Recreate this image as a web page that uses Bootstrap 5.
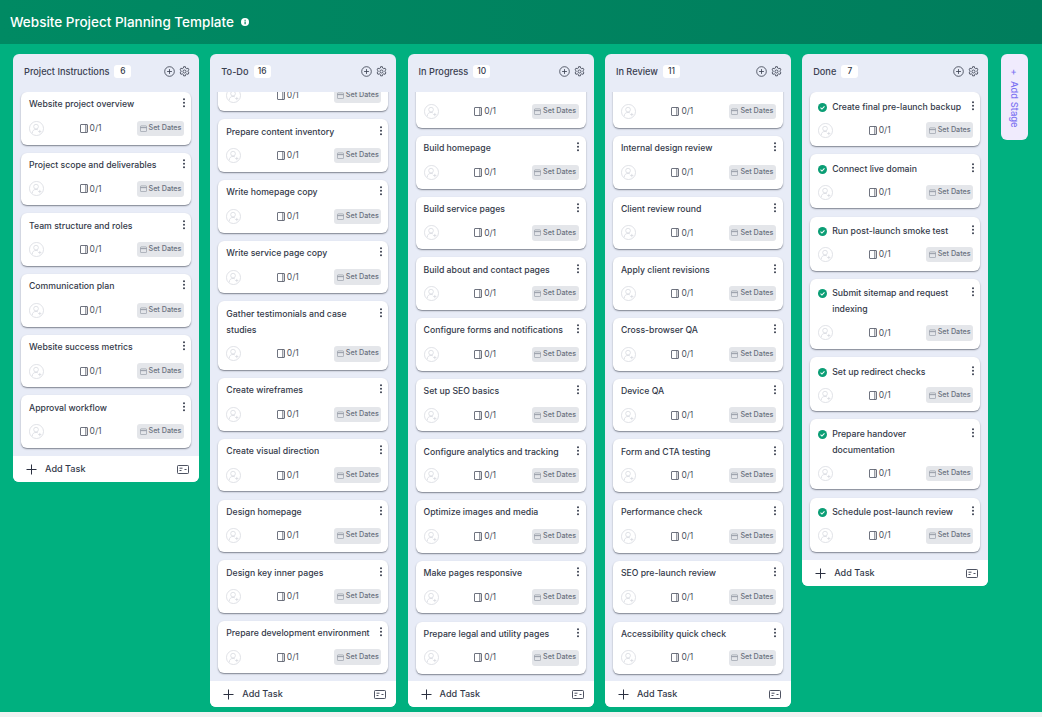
<!DOCTYPE html>
<html lang="en">
<head>
  <meta charset="UTF-8">
  <title>Website Project Planning Template</title>
  <link href="https://cdn.jsdelivr.net/npm/bootstrap@5.3.3/dist/css/bootstrap.min.css" rel="stylesheet">
  <style>
    html, body { height: 717px; overflow: hidden; }
    body { background: #f1f2f2; font-family: Inter, "Liberation Sans", sans-serif; color: #333949; }
    .top-bar { height: 44px; padding-left: 10px; background: linear-gradient(90deg, #008a63, #007d5c); color: #fff; }
    .top-bar h1 { font-size: 13.5px; font-weight: 500; margin: 0 7px 0 0; }
    .board { height: 668px; padding: 10px 13px 5px; gap: 11.3px; background: #00b07f; }
    .stage { width: 186px; flex: none; background: #e8ecf7; border-radius: 6px; overflow: hidden; }
    .stage.full { height: 653px; }
    .stage-head { height: 38px; flex: none; padding: 0 9px 3px 11px; }
    .stage-name { font-size: 9.2px; font-weight: 500; color: #3a4050; }
    .count { width: 17px; height: 13px; margin-left: 5px; border-radius: 3px; background: #fff; font-size: 8.4px; font-weight: 500; line-height: 13px; text-align: center; }
    .tasks { padding: 0 8px 8px; gap: 8.1px; overflow: hidden; }
    .stage.full .tasks { flex: 1 1 0; min-height: 0; }
    .task { flex: none; padding: 4.3px 7px 8.3px 8px; border: 0; border-radius: 6px; background: #fff; box-shadow: 0 1px 1.5px rgba(40, 45, 60, .55); }
    .task-title { font-size: 8.7px; font-weight: 500; line-height: 16px; min-width: 0; min-height: 16px; }
    .task-meta { height: 16px; margin-top: 8px; }
    .progress-text { font-size: 8.5px; color: #4b5160; gap: 2px; }
    .set-dates { width: 47px; height: 15.5px; border-radius: 3px; background: #e4e6ea; color: #6b7280; font-size: 7.2px; font-weight: 500; gap: 2px; }
    .done .tasks { gap: 8.3px; }
    .done .task { padding-top: 6.5px; padding-bottom: 8px; }
    .done .task-meta { margin-top: 7.5px; }
    .check { flex: none; margin: 4px 5px 0 0; }
    .stage-foot { height: 26px; flex: none; padding: .5px 10px 0 13px; background: #fff; font-size: 9.1px; font-weight: 500; }
    .add-stage { width: 26.5px; height: 86px; flex: none; margin-left: 1.7px; border-radius: 6px; background: #f0ebfd; color: #7c72f2; font-size: 9.4px; font-weight: 500; writing-mode: vertical-rl; gap: 6px; padding-top: 15px; }
    .kebab { flex: none; margin: 2px -1.5px 0 auto; }
  </style>
</head>
<body>
  <div class="top-bar d-flex align-items-center">
    <h1>Website Project Planning Template</h1>
    <svg width="8" height="8" viewBox="0 0 16 16"><circle cx="8" cy="8" r="8" fill="#fff"/><rect x="7" y="7" width="2.4" height="5.5" fill="#00825f"/><rect x="7" y="3.5" width="2.4" height="2.2" fill="#00825f"/></svg>
  </div>
  <div class="board d-flex align-items-start" id="board"></div>

  <script>
    // first card of the long stages is scrolled under the header, its title isn't visible
    const stages = [
      { name: "Project Instructions", count: 6, tasks: ["Website project overview", "Project scope and deliverables", "Team structure and roles", "Communication plan", "Website success metrics", "Approval workflow"] },
      { name: "To-Do", count: 16, full: true, offset: -33.3, tasks: ["", "Prepare content inventory", "Write homepage copy", "Write service page copy", "Gather testimonials and case studies", "Create wireframes", "Create visual direction", "Design homepage", "Design key inner pages", "Prepare development environment"] },
      { name: "In Progress", count: 10, full: true, offset: -16.7, tasks: ["", "Build homepage", "Build service pages", "Build about and contact pages", "Configure forms and notifications", "Set up SEO basics", "Configure analytics and tracking", "Optimize images and media", "Make pages responsive", "Prepare legal and utility pages"] },
      { name: "In Review", count: 11, full: true, offset: -16.7, tasks: ["", "Internal design review", "Client review round", "Apply client revisions", "Cross-browser QA", "Device QA", "Form and CTA testing", "Performance check", "SEO pre-launch review", "Accessibility quick check"] },
      { name: "Done", count: 7, done: true, tasks: ["Create final pre-launch backup", "Connect live domain", "Run post-launch smoke test", "Submit sitemap and request indexing", "Set up redirect checks", "Prepare handover documentation", "Schedule post-launch review"] }
    ];

    const icons = {
      plusCircle: '<svg width="11" height="11" viewBox="0 0 16 16" fill="none" stroke="#3a4050" stroke-width="1.2"><circle cx="8" cy="8" r="7"/><path d="M8 4.5v7M4.5 8h7"/></svg>',
      gear: '<svg width="11" height="11" viewBox="0 0 16 16" fill="none" stroke="#3a4050" stroke-width="1.2" stroke-linejoin="round"><circle cx="8" cy="8" r="2.2"/><path d="M6.7 1h2.6l.4 2 1.5.9 2-.7 1.3 2.3-1.5 1.3v1.7l1.5 1.3-1.3 2.3-2-.7-1.5.9-.4 2H6.7l-.4-2-1.5-.9-2 .7-1.3-2.3 1.5-1.3V6.8L1.5 5.5l1.3-2.3 2 .7 1.5-.9z"/></svg>',
      kebab: '<svg class="kebab" width="4" height="10" viewBox="0 0 4 10" fill="#3a4050"><circle cx="2" cy="1.2" r="1"/><circle cx="2" cy="4.7" r="1"/><circle cx="2" cy="8.2" r="1"/></svg>',
      avatar: '<svg width="15" height="15" viewBox="0 0 16 16" fill="none" stroke="#d5d8df" stroke-width=".8"><circle cx="8" cy="8" r="7.5"/><circle cx="7.5" cy="6" r="2.5"/><path d="M3.5 13c0-2.8 1.8-4 4-4 .8 0 1.5.2 2.1.5"/><path d="M11.5 9.500v3.500M9.800 11.200h3.400"/></svg>',
      book: '<svg width="8" height="9" viewBox="0 0 8 9" fill="none" stroke="#4b5160" stroke-width=".8"><rect x=".5" y=".5" width="7" height="8" rx=".5"/><path d="M5.8.5v8"/></svg>',
      calendar: '<svg width="7" height="7" viewBox="0 0 8 8" fill="none" stroke="#8a909c" stroke-width=".7"><rect x=".5" y="1" width="7" height="6.5" rx=".8"/><path d="M.5 3h7" stroke-width="1"/></svg>',
      plus: '<svg width="11" height="11" viewBox="0 0 11 11" fill="none" stroke="#2b3040" stroke-width="1"><path d="M5.5.5v10M.5 5.5h10"/></svg>',
      cardIcon: '<svg width="12" height="9" viewBox="0 0 12 9" fill="none" stroke="#3a4050" stroke-width=".9"><rect x=".5" y=".5" width="11" height="8" rx=".8"/><path d="M2.5 3.2h3M2.5 5.5h2M7.5 4.5h2"/></svg>',
      check: '<svg class="check" width="9" height="9" viewBox="0 0 16 16"><circle cx="8" cy="8" r="8" fill="#0b9e75"/><path d="M4.5 8.2l2.500 2.500 4.500-4.800" fill="none" stroke="#fff" stroke-width="1.8"/></svg>'
    };

    function taskCard(title, stage, index) {
      const shift = index === 0 && stage.offset ? ' style="margin-top:' + stage.offset + 'px"' : "";
      return '<div class="card task"' + shift + '>' +
        '<div class="d-flex align-items-start">' + (stage.done ? icons.check : "") +
        '<div class="task-title">' + title + '</div>' + icons.kebab + '</div>' +
        '<div class="task-meta d-flex align-items-center justify-content-between">' +
        icons.avatar +
        '<div class="d-flex align-items-center progress-text">' + icons.book + '<span>0/1</span></div>' +
        '<div class="set-dates d-flex align-items-center justify-content-center">' + icons.calendar + '<span>Set Dates</span></div>' +
        '</div></div>';
    }

    const board = document.getElementById("board");
    let html = "";
    stages.forEach(function (stage) {
      html += '<div class="stage d-flex flex-column' + (stage.full ? " full" : "") + (stage.done ? " done" : "") + '">' +
        '<div class="stage-head d-flex align-items-center">' +
        '<span class="stage-name">' + stage.name + '</span><span class="count">' + stage.count + '</span>' +
        '<span class="ms-auto d-flex gap-1">' + icons.plusCircle + icons.gear + '</span></div>' +
        '<div class="tasks d-flex flex-column">' + stage.tasks.map(function (t, i) { return taskCard(t, stage, i); }).join("") + '</div>' +
        '<div class="stage-foot d-flex align-items-center">' + icons.plus + '<span class="ms-2">Add Task</span><span class="ms-auto d-flex">' + icons.cardIcon + '</span></div>' +
        '</div>';
    });
    html += '<div class="add-stage d-flex align-items-center"><span>+</span><span>Add Stage</span></div>';
    board.innerHTML = html;
  </script>
  <script src="https://cdn.jsdelivr.net/npm/bootstrap@5.3.3/dist/js/bootstrap.bundle.min.js"></script>
</body>
</html>
